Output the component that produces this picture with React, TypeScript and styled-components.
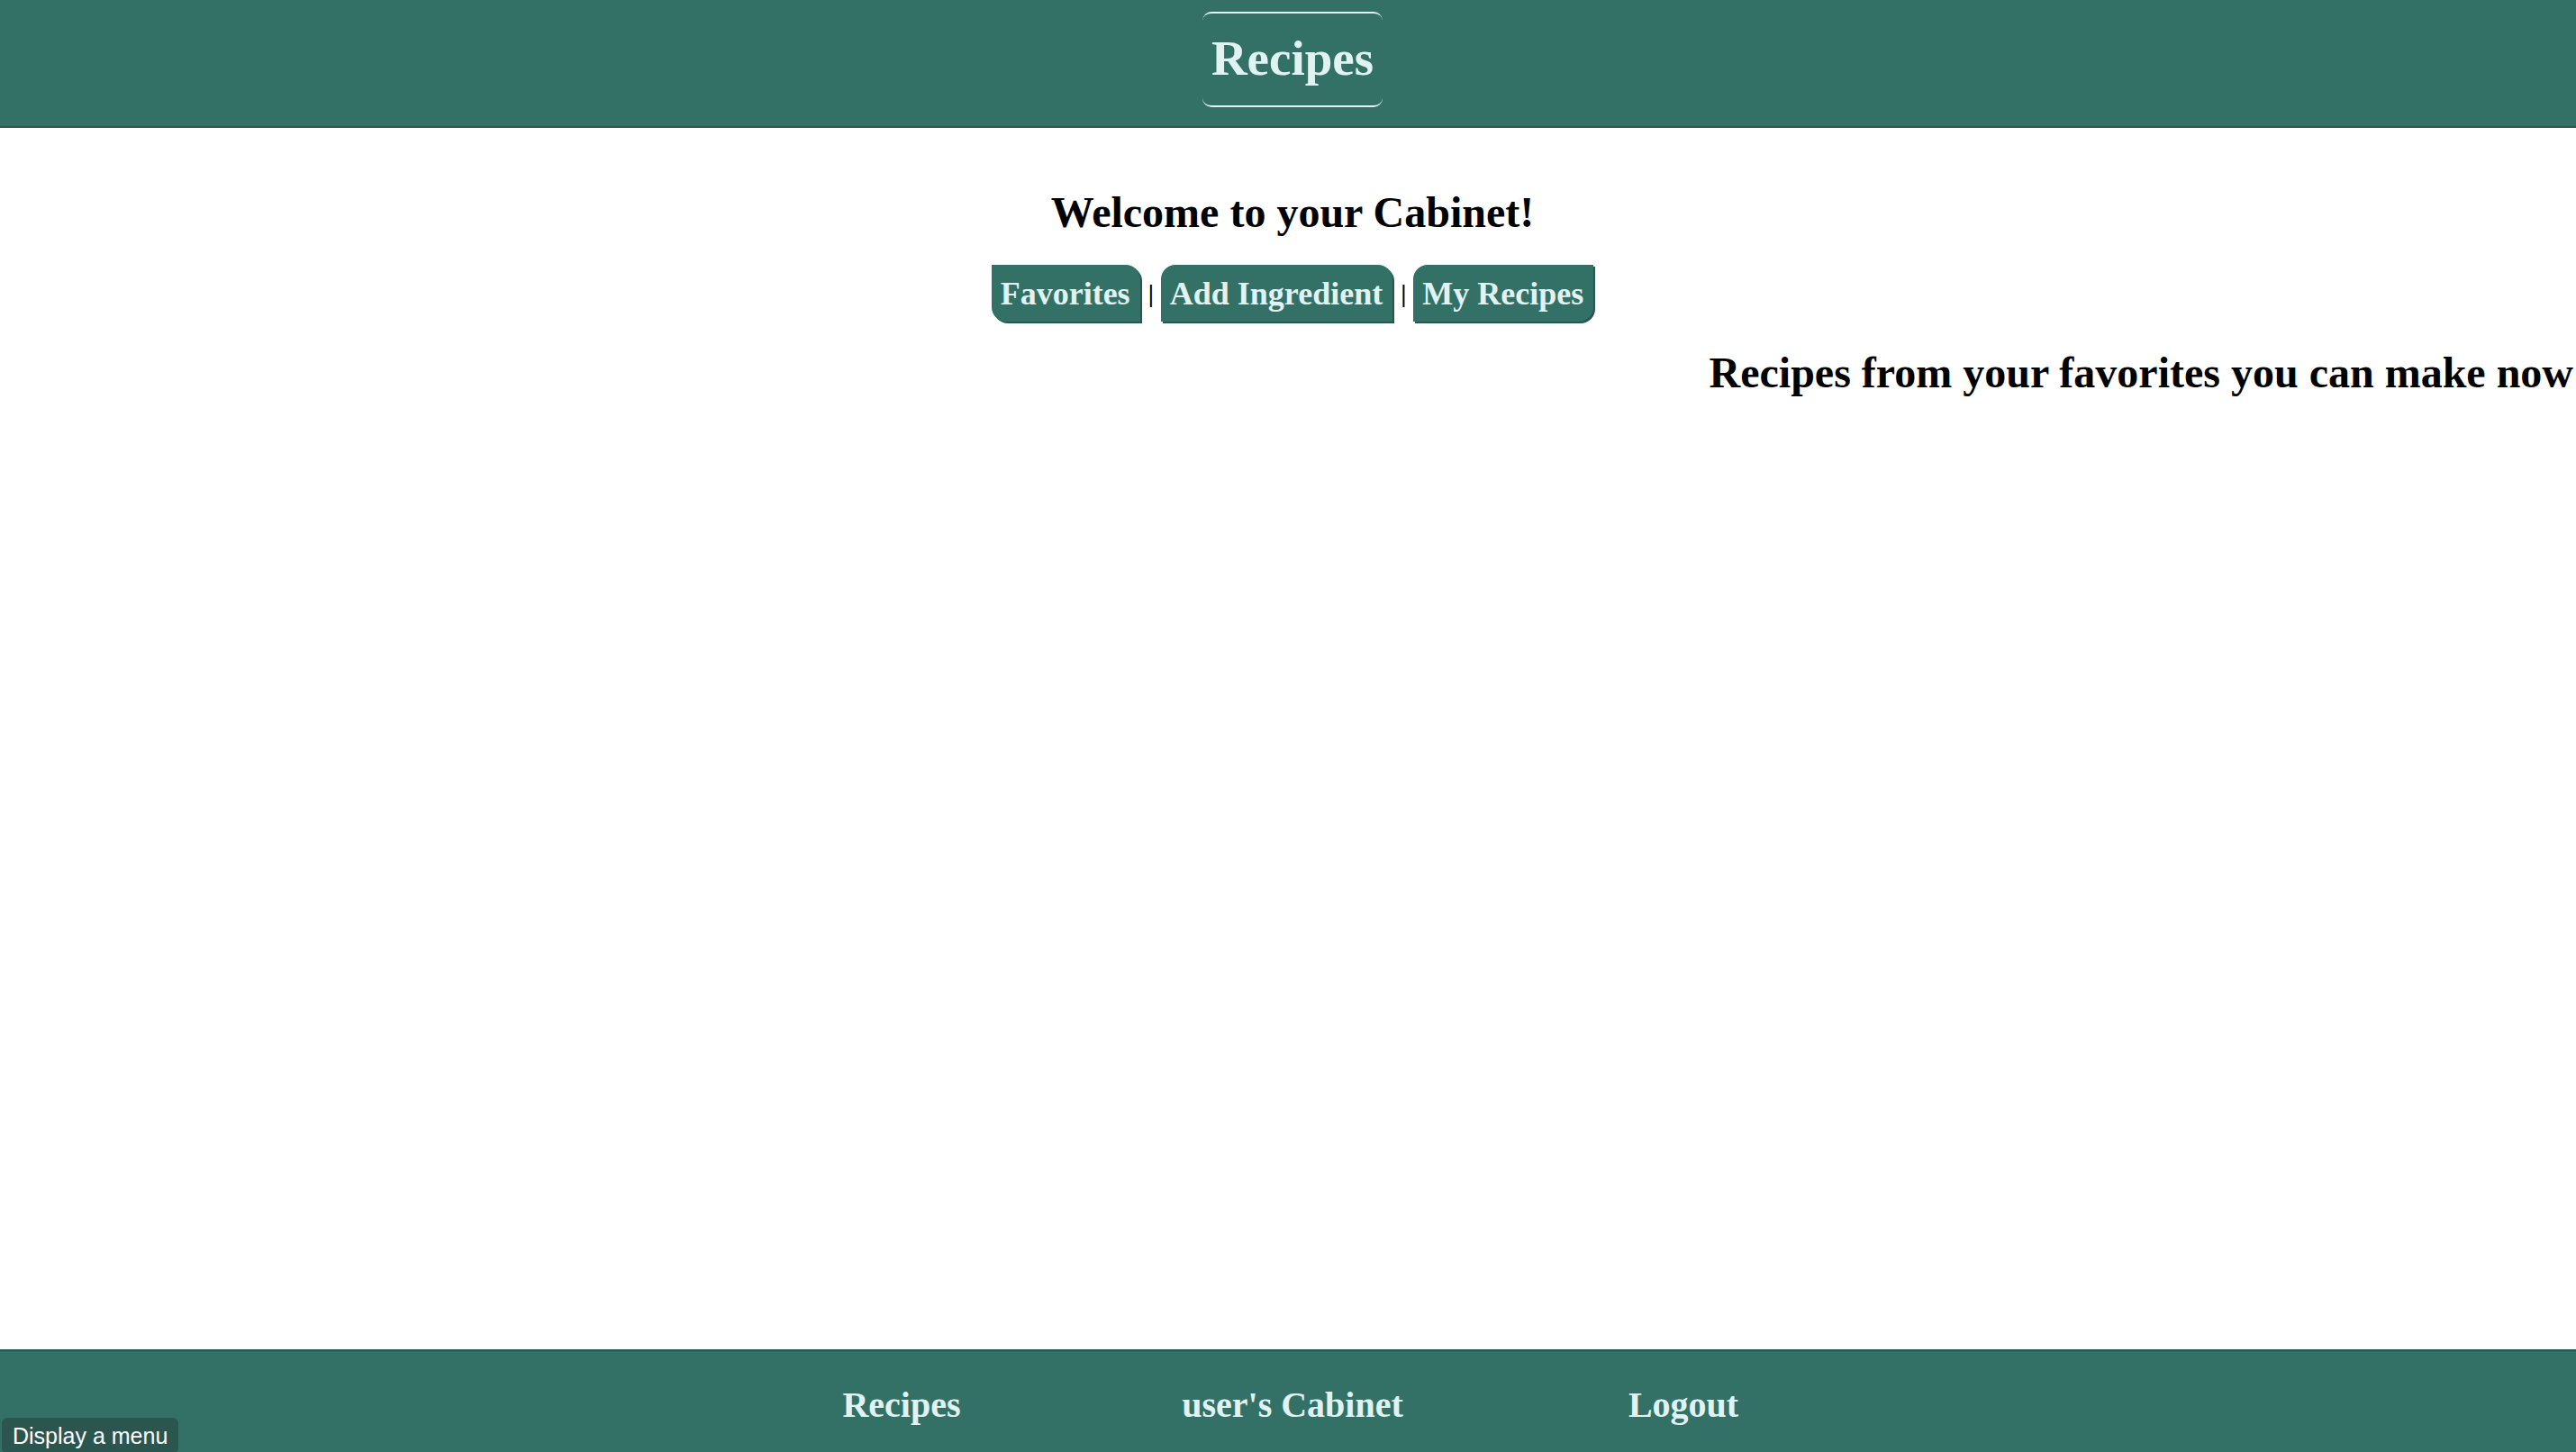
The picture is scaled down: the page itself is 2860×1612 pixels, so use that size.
import React from "react";
import styled, { createGlobalStyle } from "styled-components";

const green = "#337167";
const greenDark = "#28574f";
const mint = "#e0f2f1";

const GlobalStyle = createGlobalStyle`
  html, body {
    margin: 0;
    padding: 0;
  }

  body {
    font-family: "Liberation Serif", "Times New Roman", serif;
    background: #ffffff;
    color: #000000;
  }

  #root {
    min-height: 100vh;
    display: flex;
    flex-direction: column;
  }
`;

const ScHeader = styled.header`
  height: 140px;
  background: ${green};
  border-bottom: 2px solid ${greenDark};
  display: flex;
  justify-content: center;
  align-items: flex-start;
  padding-left: 10px;
`;

const ScBrand = styled.a`
  margin-top: 13px;
  padding: 18px 10px 21px;
  border-top: 2px solid ${mint};
  border-bottom: 2px solid ${mint};
  border-radius: 10px;
  color: ${mint};
  font-size: 55px;
  font-weight: bold;
  text-decoration: none;
  line-height: normal;
`;

const ScMain = styled.main`
  flex: 1;
  display: flex;
  flex-direction: column;
  align-items: center;
`;

const ScWelcome = styled.h2`
  margin: 66px 0 0;
  padding-left: 10px;
  font-size: 48px;
  font-weight: bold;
  line-height: normal;
`;

const ScNav = styled.nav`
  margin-top: 31px;
  padding-left: 10px;
  display: flex;
  align-items: center;
`;

type Corner = "first" | "middle" | "last";

const radii: Record<Corner, string> = {
  first: "0 16px 0 16px",
  middle: "16px 16px 0 0",
  last: "16px 0 16px 0",
};

const ScTab = styled.button<{ $corner: Corner }>`
  height: 63px;
  padding: 0 11px 0 10px;
  display: flex;
  align-items: center;
  border: none;
  border-radius: ${(p) => radii[p.$corner]};
  background: ${green};
  box-shadow: 2px 2px 0 ${greenDark};
  color: ${mint};
  font-family: "Liberation Serif", "Times New Roman", serif;
  font-size: 36px;
  font-weight: bold;
  line-height: normal;
  cursor: pointer;
`;

const ScSep = styled.span`
  margin: 0 8px 0 9px;
  font-size: 28px;
  font-weight: bold;
  line-height: 1;
`;

const ScSection = styled.h2`
  align-self: stretch;
  margin: 29px 0 0;
  padding-right: 3px;
  text-align: right;
  font-size: 48px;
  font-weight: bold;
  line-height: normal;
`;

const ScFooter = styled.footer`
  height: 114px;
  box-sizing: border-box;
  background: ${green};
  border-top: 2px solid ${greenDark};
  padding: 36px 0 0 10px;
  display: grid;
  grid-template-columns: repeat(3, 434px);
  justify-content: center;
  align-items: start;
`;

const ScFooterLink = styled.a`
  text-align: center;
  color: ${mint};
  font-size: 40px;
  font-weight: bold;
  line-height: normal;
  text-decoration: none;
`;

const ScHint = styled.div`
  position: fixed;
  left: 2px;
  bottom: -2px;
  height: 40px;
  padding: 0 12px 0 12px;
  border-radius: 6px;
  background: #2b5650;
  color: #ffffff;
  font-family: "Liberation Sans", Arial, sans-serif;
  font-size: 25px;
  line-height: 40px;
  white-space: nowrap;
`;

const tabs: { label: string; corner: Corner }[] = [
  { label: "Favorites", corner: "first" },
  { label: "Add Ingredient", corner: "middle" },
  { label: "My Recipes", corner: "last" },
];

export default function App() {
  return (
    <>
      <GlobalStyle />
      <ScHeader>
        <ScBrand href="#">Recipes</ScBrand>
      </ScHeader>
      <ScMain>
        <ScWelcome>Welcome to your Cabinet!</ScWelcome>
        <ScNav>
          {tabs.map((t, i) => (
            <React.Fragment key={t.label}>
              {i > 0 ? <ScSep>|</ScSep> : null}
              <ScTab $corner={t.corner}>{t.label}</ScTab>
            </React.Fragment>
          ))}
        </ScNav>
        <ScSection>Recipes from your favorites you can make now</ScSection>
      </ScMain>
      <ScFooter>
        <ScFooterLink href="#">Recipes</ScFooterLink>
        <ScFooterLink href="#">user's Cabinet</ScFooterLink>
        <ScFooterLink href="#">Logout</ScFooterLink>
      </ScFooter>
      <ScHint>Display a menu</ScHint>
    </>
  );
}
